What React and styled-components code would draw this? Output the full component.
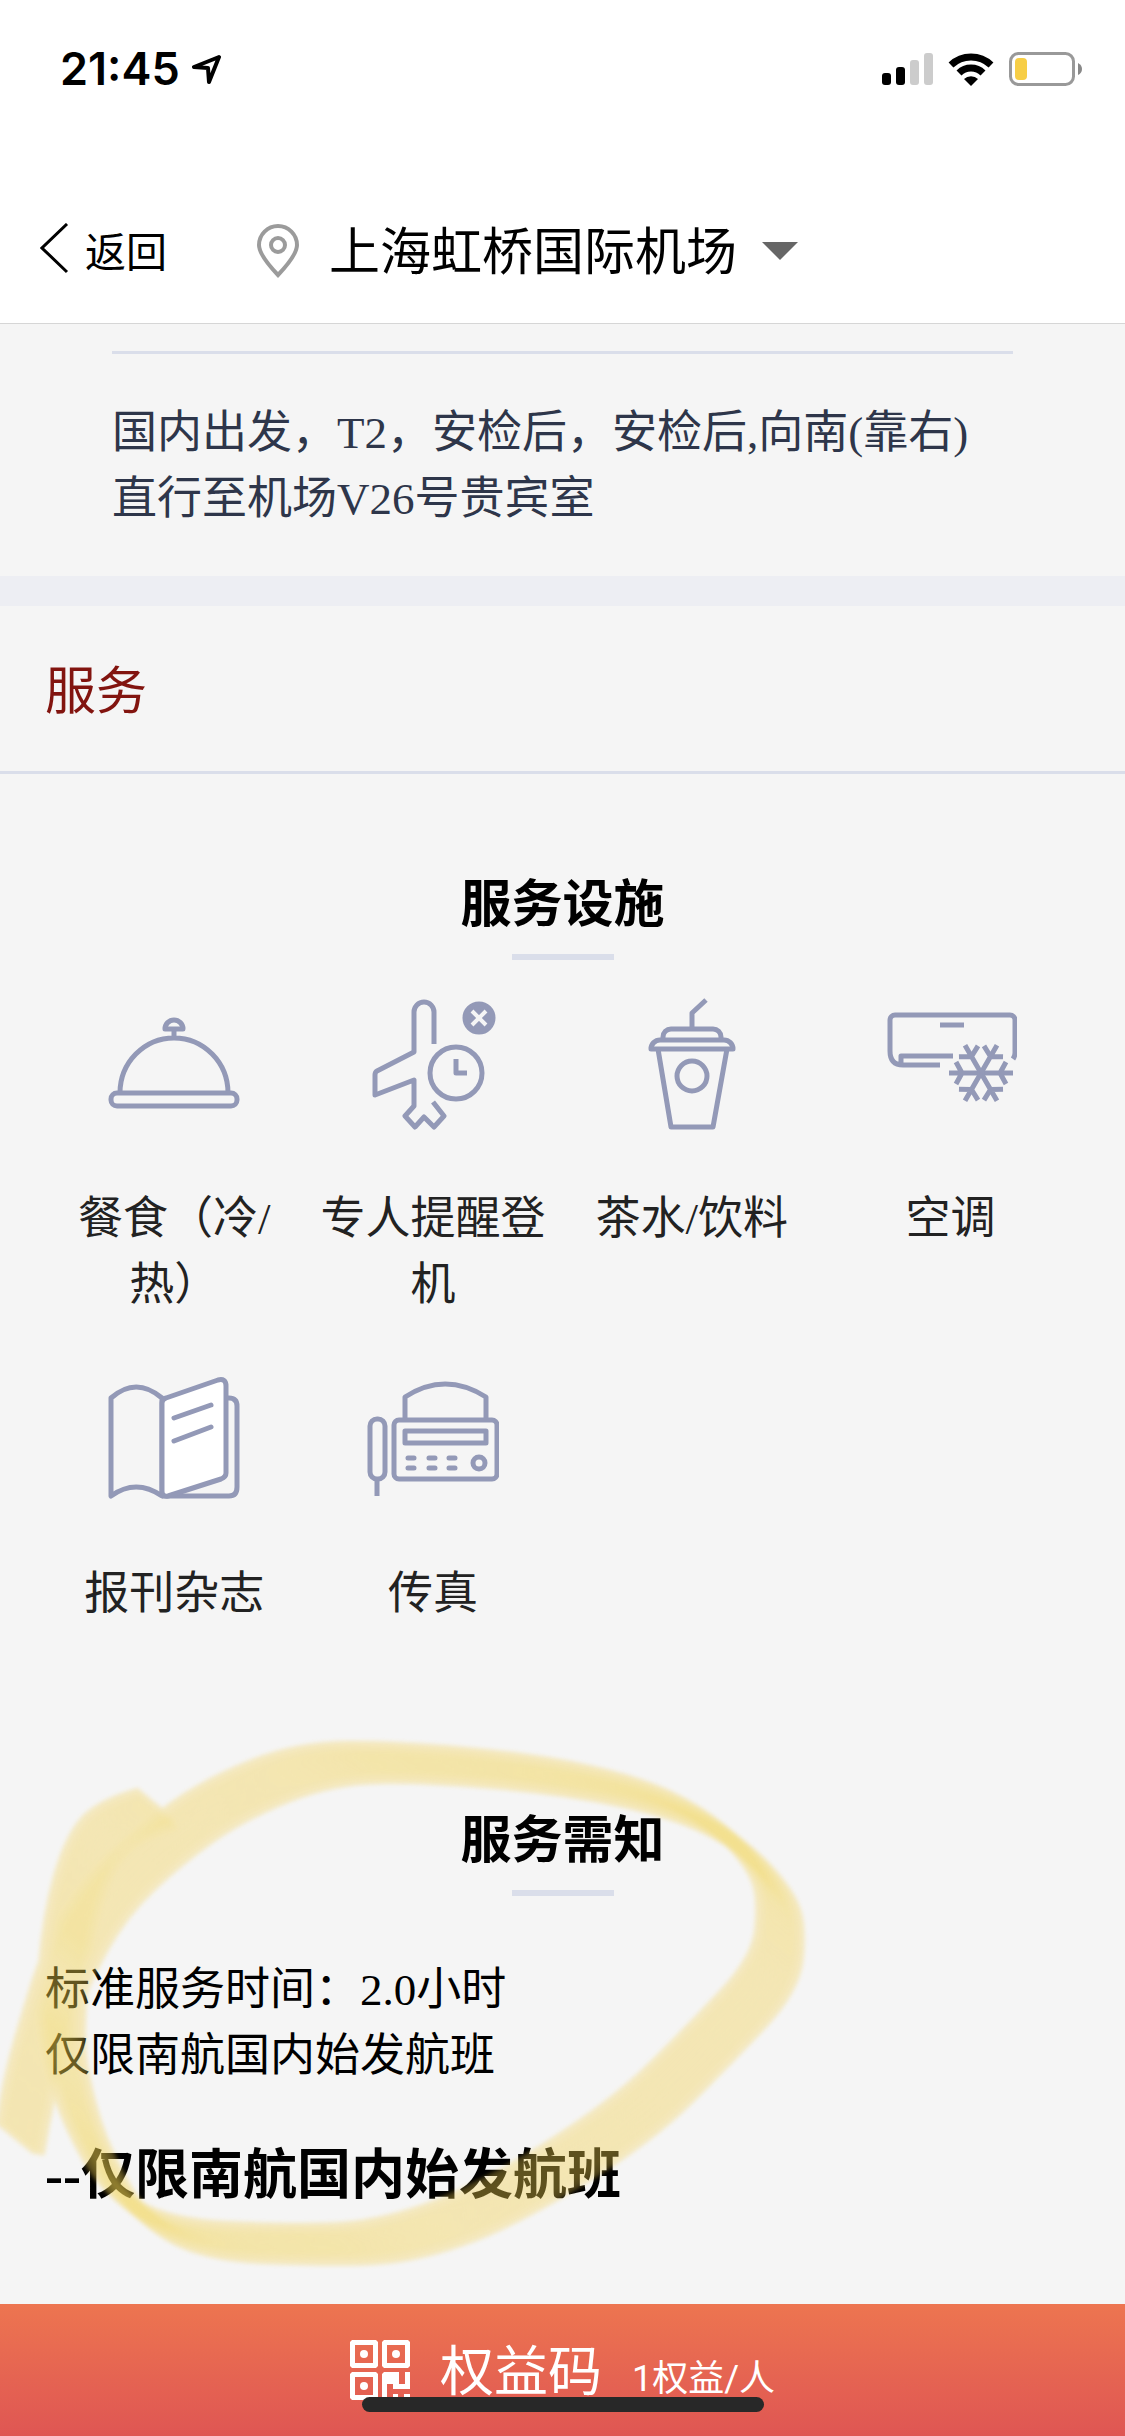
import React from 'react';
import styled, { createGlobalStyle } from 'styled-components';

const GlobalStyle = createGlobalStyle`
  :root {
    --bg: #f5f5f5;
    --line: #dadeea;
    --icon: #9399b7;
  }
  * {
    box-sizing: border-box;
    margin: 0;
    padding: 0;
  }
  body {
    background-color: var(--bg);
    color: #000;
    font-family: 'Liberation Serif', 'Noto Sans CJK SC', serif;
    font-size: 45px;
    line-height: 66px;
  }
  button,
  select {
    border: none;
    background: none;
    color: inherit;
    cursor: pointer;
  }
  svg {
    display: block;
    flex: none;
  }
`;

const PageStyle = styled.div`
  display: flex;
  flex-direction: column;
  min-height: 100vh;
`;

const HeaderStyle = styled.header`
  background-color: #fff;
  border-bottom: 1px solid #d6d6d6;
`;

const StatusBar = styled.div`
  display: flex;
  align-items: center;
  justify-content: space-between;
  height: 138px;
  padding: 0 42px 0 60px;
  font-family: Inter, sans-serif;
  font-weight: 600;
`;

const StatusGroup = styled.div`
  display: flex;
  align-items: center;
  gap: ${(props) => props.$gap}px;
`;

const NavBar = styled.nav`
  display: flex;
  align-items: center;
  height: 144px;
  margin-top: 41px;
  padding: 0 40px;
`;

const BackButton = styled.button`
  display: flex;
  align-items: center;
  gap: 16px;
  margin-right: 90px;
  padding-bottom: 4px;
  font-family: 'Noto Sans CJK SC', sans-serif;
  font-size: 41px;
`;

const AirportPicker = styled.label`
  display: flex;
  align-items: center;
  select {
    appearance: none;
    margin: 0 24px 0 30px;
    padding-bottom: 6px;
    font-family: 'Noto Sans CJK SC', sans-serif;
    font-size: 51px;
    line-height: 72px;
  }
`;

const Directions = styled.section`
  padding: 27px 112px 44px;
  color: #2e364a;
  border-bottom: 30px solid #edeef3;
  p {
    padding-top: 46px;
    border-top: 3px solid var(--line);
  }
`;

const SectionTitle = styled.h2`
  padding: 7px 45px 0;
  border-bottom: 3px solid var(--line);
  color: #82140f;
  font-size: 51px;
  font-weight: 400;
  line-height: 158px;
`;

const Block = styled.section`
  position: relative;
  padding: 92px 45px 0;
`;

const BlockTitle = styled.h3`
  font-size: 51px;
  line-height: 78px;
  text-align: center;
  &::after {
    content: '';
    display: block;
    width: 102px;
    height: 6px;
    margin: 10px auto 0;
    background-color: var(--line);
  }
`;

const FacilityGrid = styled.ul`
  display: grid;
  grid-template-columns: repeat(4, 1fr);
  row-gap: 55px;
  padding: 38px 0 83px;
  list-style: none;
`;

const Facility = styled.li`
  display: flex;
  flex-direction: column;
  align-items: center;
  gap: 56px;
  color: #222;
  text-align: center;
`;

const FacilityIcon = styled.svg`
  width: 132px;
  height: 132px;
  fill: none;
  stroke: var(--icon);
  stroke-width: 5;
  stroke-linejoin: round;
`;

const Notes = styled.div`
  padding: 61px 0 82px;
  strong {
    display: block;
    margin-top: 48px;
    font-size: 54px;
    line-height: 78px;
  }
`;

const MarkerStyle = styled.svg`
  position: absolute;
  top: 0;
  left: 0;
  pointer-events: none;
`;

const FooterButton = styled.button`
  position: relative;
  display: flex;
  justify-content: center;
  gap: 30px;
  width: 100%;
  height: 132px;
  margin-top: auto;
  padding-top: 36px;
  background-image: linear-gradient(#ed7550, #df5653);
  color: #fff;
  font-family: Roboto, 'Noto Sans CJK SC', sans-serif;
`;

const FooterText = styled.span`
  display: flex;
  align-items: baseline;
  gap: 30px;
  font-size: 54px;
  line-height: 66px;
  small {
    font-size: 36px;
  }
`;

const HomeIndicator = styled.span`
  position: absolute;
  bottom: 24px;
  left: 50%;
  width: 402px;
  height: 15px;
  margin-left: -201px;
  border-radius: 8px;
  background-color: #282828;
`;

const MealIcon = () => (
  <FacilityIcon viewBox="0 0 132 132">
    <path d="M57 31a9 9 0 0 1 18 0zM66 31v8M12 95a54 55 0 0 1 108 0" />
    <rect x="3" y="95" width="126" height="13" rx="6" />
  </FacilityIcon>
);

const BoardingIcon = () => (
  <FacilityIcon viewBox="0 0 132 132">
    <path d="M67 46V14a10 10 0 0 0-20 0v40L10 73q-2 1-2 4v20l39-15v26l-9 10 10 11 9-10 10 10 10-11-11-14" />
    <circle cx="89" cy="75" r="26" />
    <path d="M89 61v14h11" />
    <circle cx="112" cy="20" r="14" fill="#9399b7" />
    <path d="M105 13l14 14M119 13l-14 14" stroke="#f5f5f5" strokeWidth="4" />
  </FacilityIcon>
);

const DrinkIcon = () => (
  <FacilityIcon viewBox="0 0 132 132">
    <path d="M80 2L66 15v16M37 42v-3a8 8 0 0 1 8-8h42a8 8 0 0 1 8 8v3" />
    <path d="M25 51a9 9 0 0 1 9-9h64a9 9 0 0 1 9 9zM32 51l13 78h42l14-78" />
    <circle cx="66" cy="78" r="15" />
  </FacilityIcon>
);

const AirConIcon = () => (
  <FacilityIcon viewBox="0 0 132 132">
    <path d="M128 61q2-3 2-6V22a5 5 0 0 0-5-5H10a5 5 0 0 0-5 5v31q0 14 13 14h37M16 67v-9h52M55 27h24" />
    {[0, 60, 120, 180, 240, 300].map((angle) => (
      <path
        key={angle}
        d="M0 0h32M19 0l6-11M19 0l6 11"
        transform={`translate(96 75) rotate(${angle})`}
      />
    ))}
  </FacilityIcon>
);

const PressIcon = () => (
  <FacilityIcon viewBox="0 0 132 132">
    <path d="M3 123V25q25-22 51 0v98q-26-18-51 0z" />
    <path d="M118 25h3q8 0 8 8v81q0 9-8 9H54" />
    <path d="M54 30q0-4 4-5l52-18q8-2 8 6v87q0 4-5 6l-53 17q-6 1-6-5z" fill="#fff" />
    <path d="M66 45l37-13M66 68l37-14" strokeLinecap="round" />
  </FacilityIcon>
);

const FaxIcon = () => (
  <FacilityIcon viewBox="0 0 132 132">
    <rect x="3" y="46" width="15" height="60" rx="7" />
    <path d="M10 106v17M38 47V24q40-26 81 0v23" />
    <rect x="27" y="47" width="103" height="59" rx="5" />
    <rect x="38" y="58" width="81" height="12" />
    <path d="M41 85h6M62 85h6M82 85h6M41 95h6M62 95h6M82 95h6" strokeLinecap="round" />
    <circle cx="112" cy="90" r="6" />
  </FacilityIcon>
);

const facilities = [
  { name: '餐食（冷/热）', Icon: MealIcon },
  { name: '专人提醒登机', Icon: BoardingIcon },
  { name: '茶水/饮料', Icon: DrinkIcon },
  { name: '空调', Icon: AirConIcon },
  { name: '报刊杂志', Icon: PressIcon },
  { name: '传真', Icon: FaxIcon },
];

// one stroke of the highlighter, from its first point to its last
const markerPoints = [
  [158, 99], [118, 110], [88, 145], [67, 220], [59, 315], [69, 373],
  [88, 430], [125, 495], [188, 530], [302, 535], [392, 533], [494, 497],
  [630, 413], [708, 336], [776, 264], [782, 204], [771, 170], [729, 124],
  [660, 88], [549, 64], [411, 52], [315, 53], [225, 89], [160, 135],
  [104, 188], [65, 258], [47, 315], [30, 373], [20, 430],
];

const markerPath = markerPoints.reduce((path, [x, y], i) => {
  if (i === 0) return `M${x} ${y}`;
  const next = markerPoints[i + 1];
  if (!next) return `${path} L${x} ${y}`;
  return `${path} Q${x} ${y} ${(x + next[0]) / 2} ${(y + next[1]) / 2}`;
}, '');

// the nib is slanted, so the line is laid down once for each of its bristles
const bristles = Array.from({ length: 17 }, (_, i) => i - 8);

const renderBristle = (n) => (
  <path key={n} d={markerPath} transform={`translate(${n * 2.2} ${n * 1.8})`} />
);

const Marker = () => (
  <MarkerStyle width="840" height="594" viewBox="0 0 840 594" aria-hidden="true">
    <filter id="soft" colorInterpolationFilters="sRGB">
      <feGaussianBlur stdDeviation="2" />
    </filter>
    <g fill="none" stroke="#f5cf50" strokeWidth="14">
      <g filter="url(#soft)" opacity="0.27">
        {bristles.map(renderBristle)}
      </g>
      {/* ink gathers where the bristles run over each other */}
      <g filter="url(#soft)" strokeOpacity="0.07">
        {bristles.filter((n) => n % 2 === 0).map(renderBristle)}
      </g>
    </g>
  </MarkerStyle>
);

const Header = () => (
  <HeaderStyle>
    <StatusBar>
      <StatusGroup $gap={12}>
        <span>21:45</span>
        <svg width="30" height="30" viewBox="0 0 30 30" fill="none" stroke="#000" strokeWidth="4" strokeLinejoin="round">
          <path d="M27 3L2 13l14 1 1 14z" />
        </svg>
      </StatusGroup>
      <StatusGroup $gap={15}>
        <svg width="51" height="32" viewBox="0 0 51 32">
          <rect y="20" width="9" height="12" rx="3" />
          <rect x="14" y="14" width="9" height="18" rx="3" />
          <rect x="28" y="7" width="9" height="25" rx="3" fill="#ccc" />
          <rect x="42" width="9" height="32" rx="3" fill="#ccc" />
        </svg>
        <svg width="46" height="33" viewBox="0 0 46 33">
          <path d="M23 33l-7-7a10 10 0 0 1 14 0z" />
          <path d="M11 20a17 17 0 0 1 24 0M3 12a29 29 0 0 1 40 0" fill="none" stroke="#000" strokeWidth="7" />
        </svg>
        <svg width="74" height="34" viewBox="0 0 74 34">
          <rect x="1.5" y="1.5" width="63" height="31" rx="8" fill="none" stroke="#999" strokeWidth="3" />
          <rect x="6" y="6" width="12" height="22" rx="4" fill="#f7ce46" />
          <path d="M69 11q4 2 4 6t-4 6z" fill="#888" />
        </svg>
      </StatusGroup>
    </StatusBar>
    <NavBar>
      <BackButton type="button">
        <svg width="29" height="52" viewBox="0 0 29 52" fill="none" stroke="#000" strokeWidth="3">
          <path d="M27 1L2 25l25 24" />
        </svg>
        返回
      </BackButton>
      <AirportPicker>
        <svg width="42" height="54" viewBox="0 0 42 54" fill="none" stroke="#9b9b9b" strokeWidth="4">
          <path d="M21 51Q2 31 2 21a19 19 0 0 1 38 0q0 10-19 30z" />
          <circle cx="21" cy="21" r="7" />
        </svg>
        <select aria-label="机场">
          <option>上海虹桥国际机场</option>
        </select>
        <svg width="36" height="18" viewBox="0 0 36 18" fill="#666">
          <path d="M0 0h36L18 18z" />
        </svg>
      </AirportPicker>
    </NavBar>
  </HeaderStyle>
);

export default function App() {
  return (
    <PageStyle>
      <GlobalStyle />
      <Header />
      <main>
        <Directions>
          <p>国内出发，T2，安检后，安检后,向南(靠右)直行至机场V26号贵宾室</p>
        </Directions>
        <SectionTitle>服务</SectionTitle>
        <Block>
          <BlockTitle>服务设施</BlockTitle>
          <FacilityGrid>
            {facilities.map(({ name, Icon }) => (
              <Facility key={name}>
                <Icon />
                <span>{name}</span>
              </Facility>
            ))}
          </FacilityGrid>
        </Block>
        <Block>
          <BlockTitle>服务需知</BlockTitle>
          <Notes>
            <p>标准服务时间：2.0小时</p>
            <p>仅限南航国内始发航班</p>
            <strong>--仅限南航国内始发航班</strong>
          </Notes>
          <Marker />
        </Block>
      </main>
      <FooterButton type="button">
        <svg width="60" height="60" viewBox="0 0 60 60" fill="#fff">
          {[[0, 0], [32, 0], [0, 32]].map(([x, y]) => (
            <g key={`${x}-${y}`} transform={`translate(${x} ${y})`}>
              <path fillRule="evenodd" d="M2 0h24l2 2v24l-2 2H2l-2-2V2zM5 5v18h18V5z" />
              <circle cx="14" cy="14" r="4" />
            </g>
          ))}
          <path d="M34 32h15v12h6V32h5v17H43v-5h-6v16h-5V34zM43 54h5v6h-5zM54 54h6v6h-6z" />
        </svg>
        <FooterText>
          权益码
          <small>1权益/人</small>
        </FooterText>
        <HomeIndicator />
      </FooterButton>
    </PageStyle>
  );
}
